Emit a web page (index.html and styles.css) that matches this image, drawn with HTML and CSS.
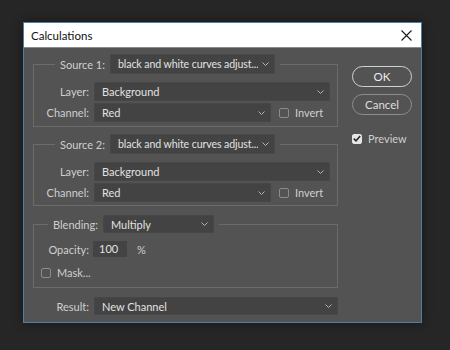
FILE: index.html
```html
<!DOCTYPE html>
<html lang="en">
<head>
    <meta charset="UTF-8">
    <title>Calculations</title>
    <link rel="stylesheet" href="styles.css">
</head>
<body>
    <div class="dialog">
        <div class="titlebar">
            <span class="title">Calculations</span>
            <svg class="close" width="11" height="11" viewBox="0 0 11 11">
                <path d="M0.5 0.5 L10.5 10.5 M10.5 0.5 L0.5 10.5" stroke="#1a1a1a" stroke-width="1.1" fill="none"/>
            </svg>
        </div>

        <div class="body">
            <div class="main">
                <fieldset class="group source-group">
                    <legend>
                        <span class="legend-label">Source 1:</span>
                        <div class="select source-select">
                            <span class="value">black and white curves adjust...</span>
                            <svg class="chevron" width="7" height="4" viewBox="0 0 7 4"><path d="M0.5 0.5 L3.5 3.5 L6.5 0.5" stroke="#b4b4b4" stroke-width="1" fill="none"/></svg>
                        </div>
                    </legend>
                    <div class="row">
                        <span class="label">Layer:</span>
                        <div class="select layer-select">
                            <span class="value">Background</span>
                            <svg class="chevron" width="7" height="4" viewBox="0 0 7 4"><path d="M0.5 0.5 L3.5 3.5 L6.5 0.5" stroke="#b4b4b4" stroke-width="1" fill="none"/></svg>
                        </div>
                    </div>
                    <div class="row">
                        <span class="label">Channel:</span>
                        <div class="select channel-select">
                            <span class="value">Red</span>
                            <svg class="chevron" width="7" height="4" viewBox="0 0 7 4"><path d="M0.5 0.5 L3.5 3.5 L6.5 0.5" stroke="#b4b4b4" stroke-width="1" fill="none"/></svg>
                        </div>
                        <span class="checkbox invert-box"></span>
                        <span class="check-label">Invert</span>
                    </div>
                </fieldset>

                <fieldset class="group source-group second">
                    <legend>
                        <span class="legend-label">Source 2:</span>
                        <div class="select source-select">
                            <span class="value">black and white curves adjust...</span>
                            <svg class="chevron" width="7" height="4" viewBox="0 0 7 4"><path d="M0.5 0.5 L3.5 3.5 L6.5 0.5" stroke="#b4b4b4" stroke-width="1" fill="none"/></svg>
                        </div>
                    </legend>
                    <div class="row">
                        <span class="label">Layer:</span>
                        <div class="select layer-select">
                            <span class="value">Background</span>
                            <svg class="chevron" width="7" height="4" viewBox="0 0 7 4"><path d="M0.5 0.5 L3.5 3.5 L6.5 0.5" stroke="#b4b4b4" stroke-width="1" fill="none"/></svg>
                        </div>
                    </div>
                    <div class="row">
                        <span class="label">Channel:</span>
                        <div class="select channel-select">
                            <span class="value">Red</span>
                            <svg class="chevron" width="7" height="4" viewBox="0 0 7 4"><path d="M0.5 0.5 L3.5 3.5 L6.5 0.5" stroke="#b4b4b4" stroke-width="1" fill="none"/></svg>
                        </div>
                        <span class="checkbox invert-box"></span>
                        <span class="check-label">Invert</span>
                    </div>
                </fieldset>

                <fieldset class="group blending-group">
                    <legend>
                        <span class="legend-label">Blending:</span>
                        <div class="select blending-select">
                            <span class="value">Multiply</span>
                            <svg class="chevron" width="7" height="4" viewBox="0 0 7 4"><path d="M0.5 0.5 L3.5 3.5 L6.5 0.5" stroke="#b4b4b4" stroke-width="1" fill="none"/></svg>
                        </div>
                    </legend>
                    <div class="row opacity-row">
                        <span class="label">Opacity:</span>
                        <div class="input">100</div>
                        <span class="unit">%</span>
                    </div>
                    <div class="row mask-row">
                        <span class="checkbox"></span>
                        <span class="check-label">Mask...</span>
                    </div>
                </fieldset>

                <div class="row result-row">
                    <span class="label">Result:</span>
                    <div class="select result-select">
                        <span class="value">New Channel</span>
                        <svg class="chevron" width="7" height="4" viewBox="0 0 7 4"><path d="M0.5 0.5 L3.5 3.5 L6.5 0.5" stroke="#b4b4b4" stroke-width="1" fill="none"/></svg>
                    </div>
                </div>
            </div>

            <div class="side">
                <button class="btn btn-ok">OK</button>
                <button class="btn btn-cancel">Cancel</button>
                <div class="preview">
                    <span class="checkbox checked">
                        <svg width="8" height="7" viewBox="0 0 8 7"><path d="M0.8 3.6 L3 5.8 L7.2 1" stroke="#2b2b2b" stroke-width="1.6" fill="none"/></svg>
                    </span>
                    <span class="check-label">Preview</span>
                </div>
            </div>
        </div>
    </div>
</body>
</html>
```

FILE: styles.css
```css
:root {
    --panel: #535353;
    --field: #434343;
    --line: #6b6b6b;
    --label: #cfcfcf;
    --text: #e2e2e2;
}

* {
    margin: 0;
    padding: 0;
    box-sizing: border-box;
}

body {
    background: #262626;
    font-family: Lato, 'Noto Sans', Arial, sans-serif;
    font-size: 11px;
    width: 450px;
    height: 350px;
    overflow: hidden;
    white-space: nowrap;
}

.dialog {
    margin: 22px 0 0 23px;
    width: 399px;
    height: 301px;
    border: 1px solid #4d7fa6;
    background: var(--panel);
    box-shadow: 0 0 10px rgba(0, 0, 0, 0.45);
}

/* Title bar */
.titlebar {
    height: 25px;
    background: #fff;
    border-bottom: 1px solid #8a8a8a;
    display: flex;
    align-items: center;
    justify-content: space-between;
    padding: 0 8px 0 7px;
}

.title {
    color: #111;
    font-size: 11.5px;
}

.close {
    margin-right: 1px;
}

/* Body */
.body {
    display: flex;
}

.main {
    width: 315px;
    padding: 6px 0 0 9px;
}

.side {
    padding: 18px 0 0 13px;
    display: flex;
    flex-direction: column;
}

/* Groups */
.group {
    width: 305px;
    border: 1px solid var(--line);
    padding: 0 0 4px 0;
}

.group legend {
    display: flex;
    align-items: center;
    margin-left: 21px;
    padding: 0 5px 0 5px;
}

.group.second {
    margin-top: 7px;
    padding-bottom: 3px;
}

.blending-group {
    margin-top: 9px;
    padding-bottom: 8px;
}

.blending-group legend {
    margin-left: 14px;
}

.legend-label {
    color: var(--label);
    margin-right: 5px;
}

.row {
    display: flex;
    align-items: center;
    margin-top: 2px;
}

.source-group legend + .row {
    margin-top: 8px;
}

.label {
    width: 55px;
    text-align: right;
    color: var(--label);
    margin-right: 5px;
}

/* Selects */
.select {
    display: flex;
    align-items: center;
    justify-content: space-between;
    gap: 4px;
    height: 19px;
    background: var(--field);
    border: 1px solid #474747;
    border-radius: 1px;
    color: var(--text);
    padding: 0 5px 0 7px;
}

.value {
    overflow: hidden;
}

.source-select {
    width: 165px;
    height: 20px;
}

.source-select .value {
    font-size: 10.6px;
    letter-spacing: -0.1px;
}

.layer-select {
    width: 236px;
}

.channel-select {
    width: 177px;
}

.blending-select {
    width: 111px;
    height: 18px;
}

.result-select {
    width: 244px;
    height: 18px;
}

.chevron {
    flex-shrink: 0;
}

/* Checkboxes */
.checkbox {
    width: 10px;
    height: 10px;
    border: 1px solid #8c8c8c;
    border-radius: 2px;
    display: inline-flex;
    align-items: center;
    justify-content: center;
}

.checkbox.checked {
    background: #e4e4e4;
    border-color: #e4e4e4;
}

.invert-box {
    margin-left: 8px;
}

.check-label {
    color: var(--label);
    margin-left: 6px;
}

/* Blending */
.opacity-row {
    margin-top: 8px;
}

.input {
    width: 34px;
    height: 16px;
    margin-left: -1px;
    background: var(--field);
    color: var(--text);
    padding-left: 6px;
    line-height: 16px;
}

.unit {
    color: var(--label);
    margin-left: 10px;
}

.mask-row {
    margin-top: 9px;
    padding-left: 7px;
}

.result-row {
    margin-top: 9px;
}

.result-row .label {
    width: 56px;
}

/* Buttons */
.btn {
    width: 60px;
    height: 21px;
    border-radius: 11px;
    background: transparent;
    font-family: inherit;
    font-size: 11.5px;
    color: #ececec;
}

.btn-ok {
    border: 1.5px solid #d2d2d2;
}

.btn-cancel {
    margin-top: 7px;
    border: 1px solid #8e8e8e;
    color: #dedede;
}

.preview {
    display: flex;
    align-items: center;
    margin-top: 17px;
}
```
